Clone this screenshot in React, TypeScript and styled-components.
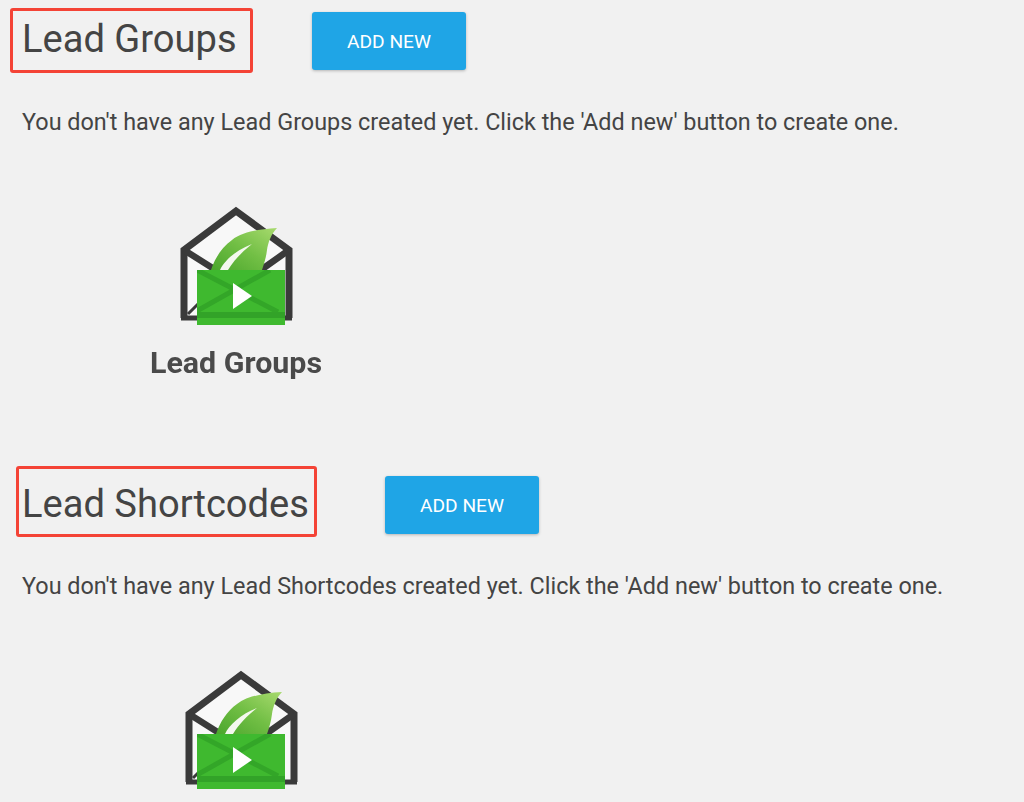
import React from 'react'
import styled, { createGlobalStyle } from 'styled-components'

const GlobalStyle = createGlobalStyle`
  html, body {
    margin: 0;
    height: 802px;
    overflow: hidden;
    background: #f1f1f1;
    color: #424242;
    font-family: Roboto, "Liberation Sans", sans-serif;
  }
`

const Page = styled.div`
  display: flex;
  flex-direction: column;
  padding-top: 8px;
`

const Section = styled.section<{ $height: number }>`
  display: flex;
  flex-direction: column;
  height: ${p => p.$height}px;
`

const HeaderRow = styled.div<{ $left: number; $gap: number }>`
  display: flex;
  align-items: flex-start;
  gap: ${p => p.$gap}px;
  margin-left: ${p => p.$left}px;
`

const TitleBox = styled.h2<{ $width: number; $height: number; $pad: number; $top: number; $bottom: number }>`
  box-sizing: border-box;
  display: flex;
  align-items: center;
  width: ${p => p.$width}px;
  height: ${p => p.$height}px;
  margin: 0;
  padding: ${p => p.$top}px 0 ${p => p.$bottom}px ${p => p.$pad}px;
  border: 3px solid #f44336;
  border-radius: 3px;
  font-size: 38.1px;
  font-weight: 400;
  color: #444;
  white-space: nowrap;
`

const AddButton = styled.button<{ $top: number }>`
  width: 154px;
  height: 58px;
  margin-top: ${p => p.$top}px;
  border: 0;
  border-radius: 3px;
  background: #1fa5e6;
  box-shadow: 0 1px 3px rgba(0, 0, 0, 0.25);
  color: #fff;
  font-family: inherit;
  font-size: 19.2px;
  font-weight: 400;
  text-transform: uppercase;
`

const Notice = styled.p<{ $top: number }>`
  margin: ${p => p.$top}px 0 0 22px;
  font-size: 23.4px;
  line-height: 28px;
  color: #444;
  white-space: nowrap;
`

const Figure = styled.div<{ $left: number; $top: number }>`
  display: flex;
  flex-direction: column;
  align-items: center;
  width: 172px;
  margin: ${p => p.$top}px 0 0 ${p => p.$left}px;
`

const FigureLabel = styled.div`
  margin-top: 20px;
  font-size: 30.4px;
  font-weight: 700;
  line-height: 34px;
  color: #4a4a4a;
  white-space: nowrap;
  filter: blur(0.5px);
`

const LogoSvg = styled.svg`
  display: block;
  filter: blur(0.5px);
`

// envelope, leaf and play mark; shift moves the green front left of the outline
const Logo = ({ id, shift }: { id: string; shift: number }) => (
  <LogoSvg width="120" height="120" viewBox="0 0 120 120">
    <defs>
      <linearGradient id={id} x1="1" y1="0" x2="0" y2="1">
        <stop offset="0" stopColor="#a8da6e" />
        <stop offset="0.5" stopColor="#72bf45" />
        <stop offset="1" stopColor="#4aa62c" />
      </linearGradient>
      <clipPath id={`${id}-front`}>
        <rect x="21" y="64" width="88" height="55" />
      </clipPath>
    </defs>
    <path d="M8 44 L60 5 L113 44 V112 H8 Z" fill="#f8f8f8" />
    <path d="M8 112 V44 L60 5 L113 44 V112" fill="none" stroke="#3a3a3a" strokeWidth="7" />
    <path d="M8 44 L46 68 M113 44 L82 66" fill="none" stroke="#3a3a3a" strokeWidth="6.5" />
    <path d="M5 112 H24 M100 112 H116" fill="none" stroke="#3a3a3a" strokeWidth="5" />
    <path d="M12 108 L22 98" stroke="#3a3a3a" strokeWidth="3" />
    <path d="M35 64 C39 52 46 41 56 34 C66 26 84 23 101 22 C95 28 92 37 91 44 C90 52 88 58 86 64 Z" fill={`url(#${id})`} />
    <path d="M44 64 C48 55 60 44 76 38 C66 46 58 54 52 64 Z" fill="#f4f8ee" />
    <g transform={`translate(${-shift} 0)`}>
      <rect x="21" y="64" width="88" height="55" fill="#3fb92f" />
      <g clipPath={`url(#${id}-front)`}>
        <path d="M21 64 L102 106 M94 64 L17 107" fill="none" stroke="#33a628" strokeWidth="5" />
        <rect x="21" y="106" width="88" height="6" fill="#32a328" />
      </g>
      <path d="M57 77 L76 90 L57 103 Z" fill="#fff" />
    </g>
  </LogoSvg>
)

const App = () => (
  <Page>
    <GlobalStyle />
    <Section $height={458}>
      <HeaderRow $left={10} $gap={59}>
        <TitleBox $width={243} $height={65} $pad={9} $top={0} $bottom={4}>Lead Groups</TitleBox>
        <AddButton $top={4}>Add new</AddButton>
      </HeaderRow>
      <Notice $top={35}>You don't have any Lead Groups created yet. Click the 'Add new' button to create one.</Notice>
      <Figure $left={150} $top={70}>
        <Logo id="leaf-a" shift={0} />
        <FigureLabel>Lead Groups</FigureLabel>
      </Figure>
    </Section>
    <Section $height={336}>
      <HeaderRow $left={16} $gap={68}>
        <TitleBox $width={301} $height={71} $pad={3} $top={5} $bottom={0}>Lead Shortcodes</TitleBox>
        <AddButton $top={10}>Add new</AddButton>
      </HeaderRow>
      <Notice $top={35}>You don't have any Lead Shortcodes created yet. Click the 'Add new' button to create one.</Notice>
      <Figure $left={155} $top={70}>
        <Logo id="leaf-b" shift={5} />
      </Figure>
    </Section>
  </Page>
)

export default App
